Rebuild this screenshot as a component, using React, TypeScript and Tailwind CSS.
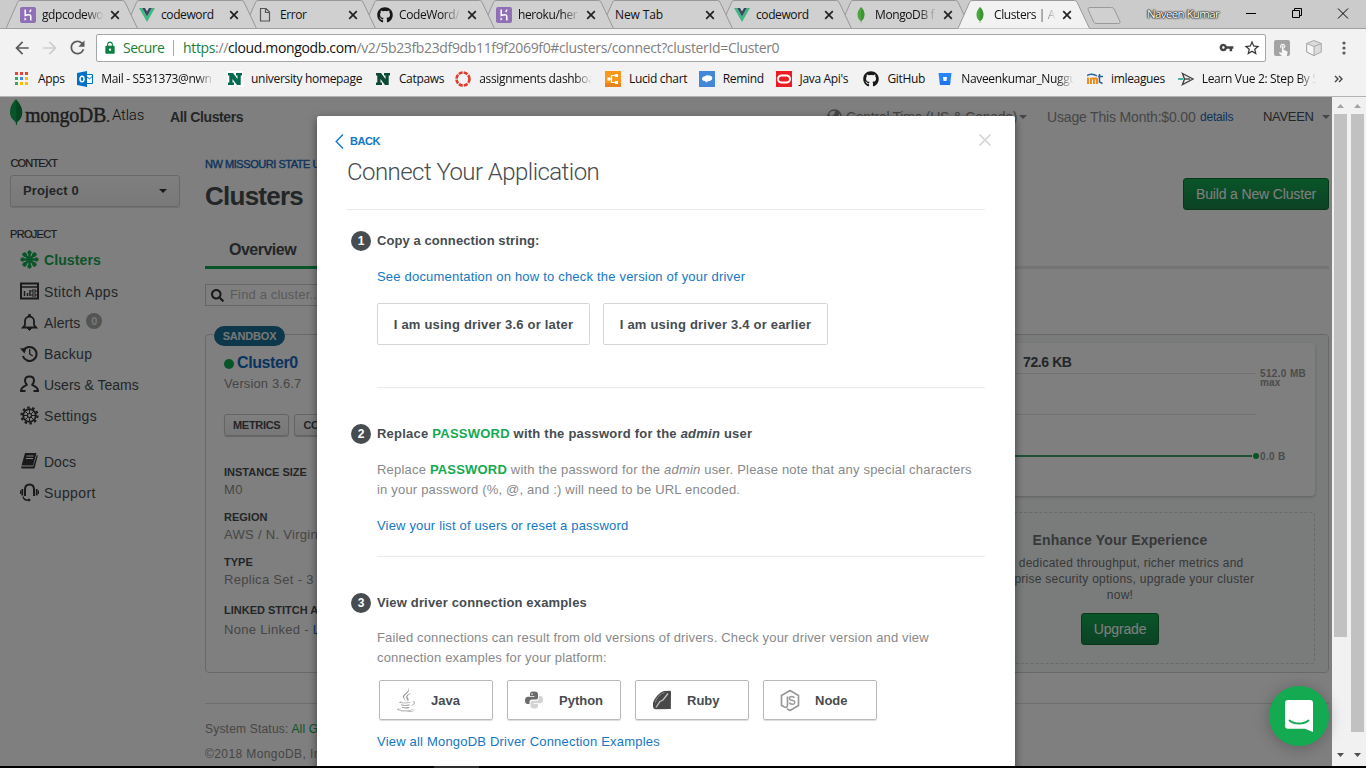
import React from "react";
import { FaGithub, FaGlobeAmericas, FaSearch, FaJava } from "react-icons/fa";
import { MdArrowBack, MdArrowForward, MdLock, MdRefresh, MdStarBorder, MdTouchApp, MdVpnKey } from "react-icons/md";

type P = { className?: string };

/* ---------- small drawings ---------- */

const Heroku = () => (
  <svg width="16" height="16" viewBox="0 0 16 16">
    <rect width="16" height="16" rx="2" fill="#8f6fb5" />
    <path d="M5.200 2.500v6c2-.8 5.600-1.400 5.600 1v4M10.800 2.500c0 1-.5 1.800-1.200 2.600" fill="none" stroke="#fff" strokeWidth="1.500" />
    <path d="M4.500 10.500v3.200l2-1.600z" fill="#fff" />
  </svg>
);
const Vue = () => (
  <svg width="16" height="16" viewBox="0 0 16 16">
    <path d="M0 1h3.200L8 9.400 12.800 1H16L8 15z" fill="#41b883" />
    <path d="M3.200 1H6l2 3.500L10 1h2.800L8 9.400z" fill="#35495e" />
  </svg>
);
const FileIcon = () => (
  <svg width="16" height="16" viewBox="0 0 16 16">
    <path d="M2.500 1.500h5.500l3.500 3.500v9h-9zM7.500 1.500v4h4" fill="none" stroke="#555" strokeWidth="1.200" />
  </svg>
);
const Leaf = () => (
  <svg width="16" height="16" viewBox="0 0 16 16">
    <path d="M8 0C5 3 4.200 6 4.600 9c.4 2.700 1.800 4 3.100 5V16h.6v-2c1.300-1 2.700-2.300 3.100-5C11.800 6 11 3 8 0z" fill="#4aa73c" />
    <path d="M8 0v14c1.300-1 2.700-2.300 3.100-5C11.800 6 11 3 8 0z" fill="#3f9434" />
  </svg>
);
const Close = () => (
  <svg width="10" height="10" viewBox="0 0 10 10">
    <path d="M1.200 1.200l7.600 7.600M8.800 1.200L1.200 8.800" stroke="#222" strokeWidth="1.700" />
  </svg>
);

/* ---------- browser tabs ---------- */

type Tab = { icon?: React.ReactNode; title: string; z: string; active?: boolean };
const tabs: Tab[] = [
  { icon: <Heroku />, title: "gdpcodewo", z: "z-[9]" },
  { icon: <Vue />, title: "codeword", z: "z-[8]" },
  { icon: <FileIcon />, title: "Error", z: "z-[7]" },
  { icon: <FaGithub size={16} color="#191717" />, title: "CodeWord/", z: "z-[6]" },
  { icon: <Heroku />, title: "heroku/her", z: "z-[5]" },
  { title: "New Tab", z: "z-[4]" },
  { icon: <Vue />, title: "codeword", z: "z-[3]" },
  { icon: <Leaf />, title: "MongoDB f", z: "z-[2]" },
  { icon: <Leaf />, title: "Clusters | A", z: "z-[10]", active: true },
];

const TabView = ({ t }: { t: Tab }) => (
  <div className={`relative -mr-[13px] h-[29px] w-[132px] shrink-0 ${t.z}`}>
    <svg className="absolute inset-0" width="132" height="29" viewBox="0 0 132 29">
      <path d="M0 28.500L11.500 2.500Q12.200.5 14 .5H116.500Q118.500.5 119.200 2.500L131.500 28.500" fill={t.active ? "#f2f2f2" : "#d0d0d0"} stroke={t.active ? "#9a9a9a" : "#979797"} />
      {!t.active && <path d="M0 28.500H132" stroke="#a0a0a0" />}
    </svg>
    <div className="relative flex h-full items-center pl-[14px]">
      {t.icon && <span className="mr-[6px] w-4">{t.icon}</span>}
      <span className={`whitespace-nowrap text-[12px] leading-[20px] text-[#111] ${t.icon ? "w-[62px] tracking-[-0.4px]" : "w-[84px] tracking-[-0.1px]"} ${t.title.length > 8 ? "mask-r-from-70% mask-r-to-100%" : ""}`}>
        {t.title}
      </span>
      <span className="ml-[6px]"><Close /></span>
    </div>
  </div>
);

const TabStrip = () => (
  <div className="relative flex h-[29px] shrink-0 border-b border-[#a0a0a0] bg-[#cbcbcb] pl-[6px]">
    {tabs.map((t, i) => <TabView key={i} t={t} />)}
    <svg className="mt-[6px] ml-[9px] shrink-0" width="36" height="19" viewBox="0 0 36 19">
      <path d="M4 1.500H25.500Q27.500 1.500 28.200 3L34 15.500Q34.500 17.500 32.500 17.500H10Q8.500 17.500 7.700 16L2 3.500Q1.600 1.500 4 1.500z" fill="#d0d0d0" stroke="#9a9a9a" />
    </svg>
    <div className="ml-[25px] w-[74px] whitespace-nowrap text-[11.500px] leading-[28px] tracking-[-0.62px] text-white [text-shadow:0_0_2px_#222,0_0_2px_#222,0_0_1px_#222,0_0_1px_#222]">Naveen Kumar</div>
    <svg className="ml-[24px] shrink-0" width="106" height="28" viewBox="0 0 106 28" fill="none" stroke="#000">
      <path d="M1 13.500H11M47.500 10.500h7v7h-7zM49.500 10.500v-2h7v7h-2M93 8.500l10 10M103 8.500l-10 10" />
    </svg>
  </div>
);

const Toolbar = () => (
  <div className="flex h-[37px] shrink-0 items-center">
    <MdArrowBack className="ml-[12px]" size={20} color="#5a5a5a" />
    <MdArrowForward className="ml-[8px]" size={20} color="#cdcdcd" />
    <MdRefresh className="ml-[7px]" size={21} color="#5a5a5a" />
    <div className="ml-[8px] flex h-[28px] w-[1170px] items-center rounded-[2px] border border-[#a6a6a6] bg-white text-[14px]">
      <MdLock className="ml-[6px]" size={14} color="#0b8043" />
      <span className="ml-[6px] w-[42px] tracking-[-0.5px] text-[#188038]">Secure</span>
      <span className="ml-[8px] h-[16px] w-px bg-[#aaa]" />
      <span className="ml-[9px] whitespace-nowrap tracking-[-0.35px] text-[#808080]">
        <span className="text-[#188038]">https</span>://<span className="text-[#111]">cloud.mongodb.com</span>/v2/5b23fb23df9db11f9f2069f0#clusters/connect?clusterId=Cluster0
      </span>
      <MdVpnKey className="ml-auto" size={15} color="#444" />
      <MdStarBorder className="mr-[4px] ml-[9px]" size={18} color="#333" />
    </div>
    <div className="ml-[8px] flex h-4 w-4 items-end justify-end rounded-[2px] bg-[#a3a3a3]"><MdTouchApp size={14} color="#f6f6f6" /></div>
    <svg className="ml-[16px]" width="16" height="16" viewBox="0 0 16 16" stroke="#999" strokeWidth=".8">
      <path d="M8 .5L15.300 3.500V12L8 15.500.7 12V3.500z" fill="#dcdcdc" />
      <path d="M.7 3.500L8 6.500V15.500L.7 12z" fill="#f6f6f6" /><path d="M8 6.500L15.300 3.500" />
    </svg>
    <svg className="ml-[20px]" width="4" height="16" fill="#5a5a5a"><circle cx="2" cy="3" r="1.600" /><circle cx="2" cy="8" r="1.600" /><circle cx="2" cy="13" r="1.600" /></svg>
  </div>
);

/* ---------- bookmarks ---------- */

const AppsGrid = () => (
  <svg width="14" height="14">
    {["#ea4335", "#ea4335", "#ea4335", "#34a853", "#4285f4", "#fbbc05", "#34a853", "#fbbc05", "#fbbc05"].map((c, i) => (
      <rect key={i} x={(i % 3) * 5} y={Math.floor(i / 3) * 5} width="3" height="3" fill={c} />
    ))}
  </svg>
);
const Outlook = () => (
  <svg width="16" height="16" viewBox="0 0 16 16">
    <path d="M9 3.500h6.500v9H9z" fill="#fff" stroke="#0072c6" /><path d="M9 5l3.500 3 3-3" fill="none" stroke="#0072c6" />
    <path d="M0 2L10 0V16L0 14z" fill="#0072c6" /><ellipse cx="5" cy="8" rx="2" ry="2.700" fill="none" stroke="#fff" strokeWidth="1.500" />
  </svg>
);
const NMark = ({ dark }: { dark?: boolean }) => (
  <svg width="16" height="16" viewBox="0 0 16 16">
    <rect width="16" height="16" fill={dark ? "#f2f2f2" : "#fff"} />
    <path d="M1 2h5l4.500 6V4.500H9V2h6v2.500h-1.300V14H10L5.500 8v3.500H7V14H1v-2.500h1.300v-7H1z" fill={dark ? "#0d4a33" : "#00694e"} />
  </svg>
);
const Ring = () => (
  <svg width="16" height="16" viewBox="0 0 16 16" fill="none" stroke="#e23b2e">
    <circle cx="8" cy="8" r="6.500" strokeWidth="2.600" strokeDasharray="4 1.100" />
  </svg>
);
const Lucid = () => (
  <svg width="16" height="16" viewBox="0 0 16 16">
    <rect width="16" height="16" fill="#f7981d" /><rect y="12" width="16" height="4" fill="#e8821a" />
    <path d="M11 4.500H6.500v7H11M3 8h3.500" stroke="#fff" strokeWidth="1.200" fill="none" />
    <path d="M10 3h3v3h-3zM10 10h3v3h-3zM2.500 6.500h3v3h-3z" fill="#fff" />
  </svg>
);
const Remind = () => (
  <svg width="16" height="16" viewBox="0 0 16 16">
    <rect width="16" height="16" fill="#4486d8" />
    <path d="M3 8c0-2 1.800-2.800 3-2.700C7 4.500 8 4 9.500 4.500 12 4 13.500 6 13.300 7.500 13 9.500 11 10 9.500 10c-1 .8-2 1.200-3 1.500V10C4.500 10 3 9.500 3 8z" fill="#fff" />
  </svg>
);
const Oracle = () => (
  <svg width="16" height="16" viewBox="0 0 16 16">
    <rect width="16" height="16" fill="#ec1c24" /><rect x="2" y="4.500" width="12" height="7" rx="3.500" fill="none" stroke="#fff" strokeWidth="2" />
  </svg>
);
const Bitbucket = () => (
  <svg width="16" height="16" viewBox="0 0 16 16">
    <path d="M1.500 2h13L13 14H3z" fill="#2684ff" /><path d="M2.600 10l.5 4h9.800l.6-4z" fill="#1d6be0" opacity=".6" /><path d="M6 6h4l-.6 4H6.600z" fill="#fff" />
  </svg>
);
const Iml = () => (
  <svg width="16" height="16" viewBox="0 0 16 16" fill="none">
    <path d="M1 6.500v6.500M4 13V7M7 13V7M10 13V7M4 7.500h6" stroke="#ef8b1f" strokeWidth="2" /><path d="M0 4.500C3 3 7 3 10 5M11 5.500h5M12.500 3v8l3 1.500" stroke="#28639c" strokeWidth="1.500" />
  </svg>
);
const Send = () => (
  <svg width="16" height="16" viewBox="0 0 16 16" fill="none" stroke="#444" strokeWidth="1.400">
    <path d="M4.500 2.500L15 8 4.500 13.500 6.500 8z" /><path d="M6.500 8H12" /><path d="M0 8h5" stroke="#3fb9a5" strokeWidth="2" />
  </svg>
);

const bookmarks: { icon: React.ReactNode; text: string; w: string; fade?: boolean }[] = [
  { icon: <Outlook />, text: "Mail - S531373@nwn", w: "w-[113px]", fade: true },
  { icon: <NMark />, text: "university homepage", w: "w-[111px]" },
  { icon: <NMark dark />, text: "Catpaws", w: "w-[43.500px]" },
  { icon: <Ring />, text: "assignments dashboa", w: "w-[113px]", fade: true },
  { icon: <Lucid />, text: "Lucid chart", w: "w-[57px]" },
  { icon: <Remind />, text: "Remind", w: "w-[40px]" },
  { icon: <Oracle />, text: "Java Api's", w: "w-[51px]" },
  { icon: <FaGithub size={16} color="#191717" />, text: "GitHub", w: "w-[37px]" },
  { icon: <Bitbucket />, text: "Naveenkumar_Nuggu", w: "w-[113px]", fade: true },
  { icon: <Iml />, text: "imleagues", w: "w-[54px]" },
  { icon: <Send />, text: "Learn Vue 2: Step By S", w: "w-[114px]", fade: true },
];

const Bookmarks = () => (
  <div className="flex h-[31px] shrink-0 items-center border-b border-[#b4b4b4] pb-[4px] text-[12px] tracking-[-0.33px] text-[#111]">
    <span className="ml-[15px]"><AppsGrid /></span>
    <span className="ml-[9px] w-[26.500px]">Apps</span>
    {bookmarks.map((b, i) => (
      <div key={i} className="ml-[12.800px] flex shrink-0 items-center">
        <span className="w-4">{b.icon}</span>
        <span className={`ml-[8px] whitespace-nowrap ${b.w} ${b.fade ? "mask-r-from-85% mask-r-to-100%" : ""}`}>{b.text}</span>
      </div>
    ))}
    <svg className="ml-[18px] shrink-0" width="9" height="8" fill="none" stroke="#444" strokeWidth="1.400"><path d="M1 1l3 3-3 3M5 1l3 3-3 3" /></svg>
  </div>
);

/* ---------- Atlas page ---------- */

const Caret = ({ className = "" }: P) => (
  <svg className={`shrink-0 ${className}`} width="8" height="4"><path d="M0 0h8L4 4z" fill="currentColor" /></svg>
);

const Header = () => (
  <div className="flex h-[40px] shrink-0 items-center whitespace-nowrap pl-[10px]">
    <svg width="13" height="27" viewBox="0 0 13 27" className="-mt-[9px]">
      <path d="M6 0C2 4 0 8 0 13c0 5 2.500 7.500 5.500 10L6 26h.8l.4-3c3-2.500 5-5 5-10C12.200 8 9 4 6 0z" fill="#13aa52" />
      <path d="M6.300 1v25h.5l.4-3c3-2.500 5-5 5-10C12.200 8 9 4 6.300 1z" fill="#0e8a41" />
    </svg>
    <span className="mt-[-4px] ml-[2px] w-[85px] font-['Liberation_Serif',serif] text-[20px] tracking-[-0.35px] text-[#3a3a3a] [-webkit-text-stroke:0.4px_#3a3a3a]">mongoDB<span className="text-[16px] text-[#777]">.</span></span>
    <span className="-mt-[4px] ml-[2px] w-[32px] font-['Roboto',sans-serif] text-[15px] font-light tracking-[-0.2px] text-[#222]">Atlas</span>
    <span className="ml-[26px] text-[14px] font-bold tracking-[-0.38px] text-[#464c4f]">All Clusters</span>
    <div className="ml-auto flex items-center text-[14px] text-[#8c8c8c]">
      <FaGlobeAmericas size={15} className="-mt-[2px] mr-[4px]" />
      <span className="w-[170px] tracking-[-0.27px]">Central Time (US &amp; Canada)</span>
      <Caret className="ml-[3px]" />
      <span className="ml-[20px] w-[149px] tracking-[-0.17px]">Usage This Month:$0.00</span>
      <span className="ml-[4px] w-[34px] text-[12px] tracking-[-0.2px] text-[#1a67b8]">details</span>
      <span className="ml-[29px] w-[51px] text-[13px] tracking-[-0.3px] text-[#464c4f]">NAVEEN</span>
      <Caret className="mr-[2px] ml-[8px]" />
    </div>
  </div>
);

const ic = { width: 19, height: 19, viewBox: "0 0 19 19" };
const IconClusters = () => (
  <svg {...ic} fill="#13aa52" stroke="#13aa52">
    {[0, 45, 90, 135, 180, 225, 270, 315].map((a) => (
      <g key={a} transform={`rotate(${a} 9.5 9.5)`}><circle cx="9.500" cy="2.500" r="1.700" /><path d="M9.500 3v5" strokeWidth="2.400" /></g>
    ))}
    <circle cx="9.500" cy="9.500" r="2.200" />
  </svg>
);
const IconStitch = () => (
  <svg {...ic} fill="none" stroke="#343434"><path d="M1 1.500h17v15H1z" strokeWidth="2" /><path d="M1 5h17" strokeWidth="1.500" /><path d="M4.500 9v5M7.500 11v3M10 8v6" strokeWidth="1.500" /><path d="M12 8h4v2h-4zM12 12h4v2h-4z" strokeWidth="1" /></svg>
);
const IconBell = () => (
  <svg {...ic} fill="none" stroke="#343434" strokeWidth="1.800"><path d="M5 12V8a4.500 4.500 0 0 1 9 0v4l2.200 2.500H2.800z" /><path d="M9.500 1v2.500" strokeWidth="2.500" /><path d="M7.500 15.500h4l-2 2z" fill="#343434" strokeWidth="1" /></svg>
);
const IconHistory = () => (
  <svg {...ic} fill="none" stroke="#343434" strokeWidth="2"><path d="M3.500 6.500a7 7 0 1 1-.6 5.500" /><path d="M0 4.500l6.500-.5-2 5.500z" fill="#343434" stroke="none" /><path d="M9.700 5v5l3 2" strokeWidth="1.300" /></svg>
);
const IconUser = () => (
  <svg {...ic} fill="none" stroke="#343434" strokeWidth="2"><path d="M7 10C5.500 8.500 5 7 5 5.800 5 3 7 1.500 9.500 1.500S14 3 14 5.800c0 1.200-.5 2.700-2 4.200" /><path d="M7.500 9.500C4 11.500 1 12 1 16h4.500M11.500 9.500C15 11.500 18 12 18 16h-4.500" /></svg>
);
const IconGear = () => (
  <svg {...ic} fill="none" stroke="#343434"><circle cx="9.500" cy="9.500" r="6.300" strokeWidth="1.800" /><circle cx="9.500" cy="9.500" r="8" strokeWidth="2.200" strokeDasharray="2.500 2.527" /><circle cx="9.500" cy="9.500" r="2" strokeWidth="1.200" /><path d="M9.500 4v3.500M9.500 11.500V15M4 9.500h3.500M11.500 9.500H15M5.600 5.600l2.500 2.500M10.900 10.900l2.500 2.500M13.400 5.600l-2.500 2.500M8.100 10.900l-2.500 2.500" strokeWidth="1" /></svg>
);
const IconBook = () => (
  <svg {...ic} fill="#343434"><path d="M5 1h11.500L13 13.500H1.500zM1.200 14.500h12L16.800 3l1 .5L14.500 16.500H2.500C1 16.500.8 15.300 1.200 14.500z" /><path d="M6.500 4h7M6 6.500h7" stroke="#fff" strokeWidth="1" /></svg>
);
const IconSupport = () => (
  <svg {...ic} fill="none" stroke="#343434" strokeWidth="2"><path d="M5 13V6.500C5 3 7 1.500 9.500 1.500S14 3 14 6.500V13" /><path d="M2.300 6v6.500M16.700 6v6.500" strokeWidth="1.800" /><path d="M.6 7.500v3.500M18.400 7.500v3.500" strokeWidth="1.200" /><path d="M3 13.500c.5 2.500 2 3.700 5 3.700" strokeWidth="1.300" /><circle cx="9" cy="17" r="1" fill="#343434" strokeWidth="1" /></svg>
);

const NavItem = ({ icon, label, cls = "", badge }: { icon: React.ReactNode; label: string; cls?: string; badge?: string }) => (
  <div className={`flex h-[31px] items-center text-[14px] text-[#464c4f] ${cls}`}>
    <span className="mr-[5px] ml-[10px] pb-[2px]">{icon}</span>
    <span>{label}</span>
    {badge && <span className="mb-[5px] ml-[6px] h-4 w-4 rounded-full bg-[#a8a8a8] text-center text-[11px] leading-4 font-bold text-[#eee]">{badge}</span>}
  </div>
);

const Sidebar = () => (
  <div className="flex w-[205px] shrink-0 flex-col pl-[10px]">
    <div className="mt-[18px] h-4 text-[11px] leading-4 tracking-[-0.45px] text-[#343434] [-webkit-text-stroke:0.2px_#343434] pl-[0.500px] w-[60px]"><span className="tracking-[-0.85px]">CONTEXT</span></div>
    <div className="mt-[4px] flex h-[32px] w-[170px] items-center justify-between rounded-[3px] border border-[#d0d0d0] bg-linear-to-b from-white to-[#f2f2f2] px-[12px] text-[13px] font-bold tracking-[0.1px] text-[#464c4f] shadow-[0_1px_1px_#ddd]">
      Project 0 <Caret className="text-[#343434]" />
    </div>
    <div className="mt-[19px] mb-[4px] h-4 text-[11px] leading-4 tracking-[-0.7px] text-[#343434] [-webkit-text-stroke:0.2px_#343434]">PROJECT</div>
    <NavItem icon={<IconClusters />} label="Clusters" cls="-mt-px mb-px font-bold tracking-[0.1px] text-[#13aa52]!" />
    <NavItem icon={<IconStitch />} label="Stitch Apps" cls="tracking-[0.4px]" />
    <NavItem icon={<IconBell />} label="Alerts" badge="0" cls="tracking-[0.1px]" />
    <NavItem icon={<IconHistory />} label="Backup" cls="tracking-[0.25px]" />
    <NavItem icon={<IconUser />} label="Users &amp; Teams" />
    <NavItem icon={<IconGear />} label="Settings" cls="tracking-[0.3px]" />
    <NavItem icon={<IconBook />} label="Docs" cls="mt-[15px]" />
    <NavItem icon={<IconSupport />} label="Support" cls="tracking-[0.4px]" />
  </div>
);

const Fact = ({ k, children, cls }: { k: string; children: React.ReactNode; cls: string }) => (
  <div className={cls}>
    <div className="h-4 text-[11px] leading-4 font-bold text-[#464c4f]">{k}</div>
    <div className="h-[18px] text-[13px] leading-[20px] tracking-[0.3px] text-[#8c8c8c]">{children}</div>
  </div>
);

const SmallBtn = ({ children }: { children: React.ReactNode }) => (
  <span className="flex h-[22px] items-center rounded-[3px] border border-[#c9c9c9] bg-linear-to-b from-white to-[#f0f0f0] px-[8px] text-[11px] font-bold tracking-[-0.3px] text-[#464c4f] shadow-[0_1px_1px_#ccc]">{children}</span>
);

const greenBtn = "flex h-[32px] items-center justify-center rounded-[3px] border border-[#11702f] bg-linear-to-b from-[#13aa52] to-[#18844a] text-[14px] tracking-[-0.15px] text-white";

const ClusterCard = () => (
  <div className="relative mt-[28px] flex h-[339px] shrink-0 rounded-[4px] border border-[#d0d0d0]">
    <span className="absolute -top-[9px] left-[8px] flex h-[20px] w-[71px] items-center justify-center rounded-full bg-[#1a6f94] text-[11px] font-bold tracking-[-0.2px] text-[#eee]">SANDBOX</span>
    <div className="flex w-[295px] shrink-0 flex-col whitespace-nowrap pl-[18px]">
      <div className="mt-[19px] flex h-[18px] items-center text-[16px] font-bold tracking-[-0.4px] text-[#1168bd]">
        <span className="mt-[2px] mr-[3px] h-[10px] w-[10px] rounded-full bg-[#13aa52]" />Cluster0
      </div>
      <div className="mt-[3px] h-[18px] text-[13px] leading-[18px] tracking-[0.12px] text-[#8c8c8c]">Version 3.6.7</div>
      <div className="mt-[21px] flex gap-[5px]"><SmallBtn>METRICS</SmallBtn><SmallBtn>CONNECT</SmallBtn></div>
      <Fact cls="mt-[28px]" k="INSTANCE SIZE">M0</Fact>
      <Fact cls="mt-[11px]" k="REGION">AWS / N. Virginia</Fact>
      <Fact cls="mt-[11px]" k="TYPE">Replica Set - 3 nodes</Fact>
      <Fact cls="mt-[14px]" k="LINKED STITCH APP"><span className="inline-block pt-[2px]">None Linked - <span className="text-[#1168bd]">Link</span></span></Fact>
    </div>
    <div className="flex grow flex-col rounded-r-[3px] bg-[#f4f8f6] pt-[8px] pr-[13px] pl-[29px]">
      <div className="flex h-[153px] shrink-0 flex-col rounded-[4px] bg-white shadow-[0_1px_3px_#bbb]">
        <div className="mt-[10px] h-[18px] pl-[493px] text-[14px] leading-[18px] font-bold tracking-[-0.4px] text-[#464c4f]">72.6 KB</div>
        <div className="flex">
          <svg width="731" height="90" className="shrink-0">
            <path d="M0 2.500H726M0 43.500H726" stroke="#e4e4e4" />
            <path d="M0 85H722" stroke="#3aa566" strokeWidth="2" />
            <circle cx="726" cy="85" r="3" fill="#13aa52" />
          </svg>
          <div className="-ml-px flex flex-col text-[10px] leading-[9px] font-bold tracking-[0.35px] whitespace-nowrap text-[#989898]">
            <span className="-mt-[2px]">512.0 MB</span><span className="tracking-[0.2px]">max</span><span className="mt-[65px]">0.0 B</span>
          </div>
        </div>
      </div>
      <div className="mt-[16px] flex h-[152px] shrink-0 flex-col items-center rounded-[4px] border border-dashed border-[#d2d2d2] pl-[395px] text-[#6f7273]">
        <div className="mt-[17px] h-[20px] text-[14px] leading-[20px] font-bold tracking-[0.15px]">Enhance Your Experience</div>
        <div className="mt-[5px] text-center text-[12px] leading-4 tracking-[0.25px] whitespace-nowrap">
          For dedicated throughput, richer metrics and<br />enterprise security options, upgrade your cluster<br />now!
        </div>
        <div className={`mt-[10px] w-[78px] ${greenBtn}`}>Upgrade</div>
      </div>
    </div>
  </div>
);

const Main = () => (
  <div className="flex w-[1124px] shrink-0 flex-col">
    <div className="mt-[19px] h-4 text-[11px] leading-4 tracking-[-0.45px] text-[#1a67b8] [-webkit-text-stroke:0.4px_#1a67b8]">NW MISSOURI STATE UNIVERSITY</div>
    <div className="mt-[6px] flex h-[32px] items-center justify-between">
      <h1 className="pt-[4px] text-[26px] font-bold tracking-[-0.75px] text-[#464c4f]">Clusters</h1>
      <div className={`w-[146px] ${greenBtn}`}>Build a New Cluster</div>
    </div>
    <div className="mt-[22px] flex h-[37px] border-b-[3px] border-[#e8e8e8]">
      <div className="h-[37px] border-b-[3px] border-[#13aa52] px-[24px] text-[16px] leading-[36px] font-bold tracking-[-0.5px] text-[#464c4f]">Overview</div>
    </div>
    <div className="mt-[15px] flex h-[22px] w-[240px] items-center border border-[#cdcdcd] pl-[5px] text-[13px] tracking-[0.15px] text-[#b5b5b5]">
      <FaSearch size={13} color="#343434" /><span className="ml-[6px]">Find a cluster...</span>
    </div>
    <ClusterCard />
    <div className="mt-[30px] h-px shrink-0 bg-[#dcdcdc]" />
    <div className="mt-[15px] h-[20px] text-[12px] leading-[20px] tracking-[0.2px] text-[#8c8c8c]">System Status: <span className="text-[#13aa52]">All Good</span></div>
    <div className="mt-[5px] h-[20px] text-[12px] leading-[20px] tracking-[0.4px] text-[#8c8c8c]">©2018 MongoDB, Inc.</div>
  </div>
);

/* ---------- modal ---------- */

const Step = ({ n, cls, children }: { n: string; cls: string; children: React.ReactNode }) => (
  <div className={`flex h-[20px] items-center text-[13px] font-bold text-[#464c4f] ${cls}`}>
    <span className="mr-[6px] ml-[4px] h-[20px] w-[20px] rounded-full bg-[#464c4f] text-center text-[12px] leading-[20px] tracking-normal text-white">{n}</span>
    {children}
  </div>
);

const JavaIcon = () => <FaJava size={24} color="#999" />;
const PythonIcon = () => (
  <svg width="18" height="18" viewBox="0 0 18 18">
    <path d="M9 .5C5 .5 5 2 5 3.500V5h4.500v.7H3C1 5.700 0 7 0 9.500s1 3.500 2.500 3.500H4.500V11c0-1.500 1-2.500 2.500-2.500h4c1.300 0 2-.8 2-2V3.500C13 1.500 12 .5 9 .5z" fill="#6c6c6c" />
    <path d="M9 17.500c4 0 4-1.500 4-3V13H8.500v-.7H15c2 0 3-1.300 3-3.800S17 5 15.500 5H13.800v2.500c0 1.500-1 2.200-2.500 2.200H7.500c-1.300 0-2 .8-2 2v3C5.500 16.500 6.500 17.500 9 17.500z" fill="#d4d4d4" />
    <circle cx="7" cy="3" r=".8" fill="#fff" />
  </svg>
);
const RubyIcon = () => (
  <svg width="20" height="20" viewBox="0 0 20 20">
    <path d="M12 1L18 .8Q19 1 19 2L18.800 19 3.500 19.300Q1 19 1 16.500V13C2.500 8 7 2.500 12 1z" fill="#484848" />
    <path d="M3.500 12.500C4 8 8.500 3.500 12.500 2.500" stroke="#8c8c8c" strokeWidth="1" fill="none" />
    <path d="M4 17.500l4-6 3-1.500 5-6.500" stroke="#c4c4c4" strokeWidth="1.300" fill="none" />
  </svg>
);
const NodeIcon = () => (
  <svg width="20" height="23" viewBox="0 0 20 23" fill="none" stroke="#999" strokeWidth="1.700" strokeLinejoin="round">
    <path d="M7 19.800L10 21.500l8.500-5V6.500L10 1.500 1.500 6.500v10l3 1.500c2 .8 3-.2 3-2V7.500" />
    <path d="M14.500 9c-.5-1.200-1.500-1.500-2.500-1.500-3.500 0-3 3.200-.8 3.700 2.300.4 4 .6 3.500 2.700-.5 2-4.700 1.800-5.200-.4" strokeWidth="1.400" />
  </svg>
);

const Driver = ({ icon, name }: { icon: React.ReactNode; name: string }) => (
  <div className="flex h-[40px] w-[114px] items-center rounded-[2px] border border-[#b8babb] pl-[12px] text-[13px] font-bold text-[#464c4f] shadow-[0_1px_1px_#ddd]">
    <span className="flex w-[28px] justify-center">{icon}</span>
    <span className="ml-[11px] pt-px">{name}</span>
  </div>
);

const link = "h-[20px] text-[13px] leading-[20px] text-[#1377c4]";
const pw = "font-bold text-[#13aa52]";

const Modal = () => (
  <div className="absolute top-[19px] left-[317px] flex h-[680px] w-[698px] flex-col rounded-[2px] bg-white pr-[30px] pl-[30px] whitespace-nowrap shadow-[0_3px_8px_rgba(0,0,0,0.5)]">
    <div className="-mr-[6px] mt-[15px] -ml-[12px] flex h-[20px] items-center text-[11px] font-bold tracking-[-0.45px] text-[#1377c4]">
      <svg width="9" height="15" fill="none" stroke="currentColor" strokeWidth="1.400"><path d="M8 .5L1.200 7.500 8 14.500" /></svg>
      <span className="ml-[6px]">BACK</span>
      <svg className="mb-[2px] ml-auto" width="12" height="12" stroke="#d4d6d7" strokeWidth="1.600"><path d="M.5.5l11 11M11.500.5l-11 11" /></svg>
    </div>
    <h2 className="mt-[6px] h-[30px] font-['Roboto',sans-serif] text-[24px] leading-[30px] font-light tracking-[-0.55px] text-[#464c4f]">Connect Your Application</h2>
    <div className="mt-[22px] h-px shrink-0 bg-[#e9eaea]" />
    <Step n="1" cls="mt-[21px] tracking-[0.08px]">Copy a connection string:</Step>
    <div className="flex flex-col pl-[30px]">
      <div className={`mt-[16px] tracking-[0.2px] ${link}`}>See documentation on how to check the version of your driver</div>
      <div className="mt-[16px] flex gap-[13px] text-[13px] font-bold tracking-[0.2px] text-[#464c4f]">
        <div className="flex h-[42px] w-[213px] items-center justify-center rounded-[2px] border border-[#d4d6d7] pt-[2px]">I am using driver 3.6 or later</div>
        <div className="flex h-[42px] w-[225px] items-center justify-center rounded-[2px] border border-[#d4d6d7] pt-[2px]">I am using driver 3.4 or earlier</div>
      </div>
      <div className="mt-[42px] h-px bg-[#e9eaea]" />
    </div>
    <Step n="2" cls="mt-[36px] tracking-[0.23px]"><span>Replace <span className="text-[#13aa52]">PASSWORD</span> with the password for the <i>admin</i> user</span></Step>
    <div className="flex flex-col pl-[30px]">
      <p className="mt-[16px] text-[13px] leading-[20px] tracking-[0.195px] text-[#88898a]">
        Replace <span className={pw}>PASSWORD</span> with the password for the <i>admin</i> user. Please note that any special characters<br />
        in your password (%, @, and :) will need to be URL encoded.
      </p>
      <div className={`mt-[16px] tracking-[0.17px] ${link}`}>View your list of users or reset a password</div>
      <div className="mt-[20px] h-px bg-[#e9eaea]" />
    </div>
    <Step n="3" cls="mt-[36px] tracking-[0.16px]">View driver connection examples</Step>
    <div className="flex flex-col pl-[30px]">
      <p className="mt-[15px] text-[13px] leading-[20px] tracking-[0.15px] text-[#88898a]">
        Failed connections can result from old versions of drivers. Check your driver version and view<br />
        connection examples for your platform:
      </p>
      <div className="mt-[12px] ml-[2px] flex gap-[14px]">
        <Driver icon={<JavaIcon />} name="Java" />
        <Driver icon={<PythonIcon />} name="Python" />
        <Driver icon={<RubyIcon />} name="Ruby" />
        <Driver icon={<NodeIcon />} name="Node" />
      </div>
      <div className={`mt-[12px] tracking-[0.2px] ${link}`}>View all MongoDB Driver Connection Examples</div>
    </div>
  </div>
);

const Scrollbar = ({ thumb }: { thumb: string }) => (
  <div className="flex w-[17px] shrink-0 flex-col items-center bg-[#f1f1f1] pr-[2px] pl-[2px]">
    <svg className="mt-[7px]" width="7" height="4"><path d="M0 4h7L3.500 0z" fill="#a3a3a3" /></svg>
    <div className={`mt-[6px] w-[13px] bg-[#c1c1c1] ${thumb}`} />
    <svg className="mt-auto mb-[9px]" width="7" height="4"><path d="M0 0h7L3.500 4z" fill="#505050" /></svg>
  </div>
);

export default function App() {
  return (
    <div className="flex h-[768px] w-[1366px] flex-col overflow-hidden bg-[#f2f2f2] font-['Open_Sans','Noto_Sans',sans-serif]">
      <TabStrip />
      <Toolbar />
      <Bookmarks />
      <div className="relative flex h-[669px] shrink-0 overflow-hidden bg-white font-['Liberation_Sans',Arial,sans-serif]">
        <div className="relative w-[1332px] shrink-0 overflow-hidden">
          <Header />
          <div className="flex"><Sidebar /><Main /></div>
          <div className="absolute inset-0 bg-black/50" />
          <Modal />
        </div>
        <Scrollbar thumb="h-[523px]" />
        <Scrollbar thumb="h-[618px]" />
        <div className="absolute top-[589px] left-[1269px] flex h-[60px] w-[60px] items-center justify-center rounded-full bg-[#13aa52] shadow-[0_2px_16px_rgba(0,0,0,0.25)]">
          <svg width="28" height="32" viewBox="0 0 28 32">
            <path d="M3 0H25a3 3 0 0 1 3 3V32L20 28.800H3a3 3 0 0 1-3-3V3a3 3 0 0 1 3-3z" fill="#fff" />
            <path d="M4.500 20.500c5 4 14 4 19 0" fill="none" stroke="#13aa52" strokeWidth="1.800" strokeLinecap="round" />
          </svg>
        </div>
      </div>
      <div className="h-[2px] shrink-0 bg-black pl-[434px]"><div className="h-[2px] w-[45px] bg-[#2e2e2e]" /></div>
    </div>
  );
}
